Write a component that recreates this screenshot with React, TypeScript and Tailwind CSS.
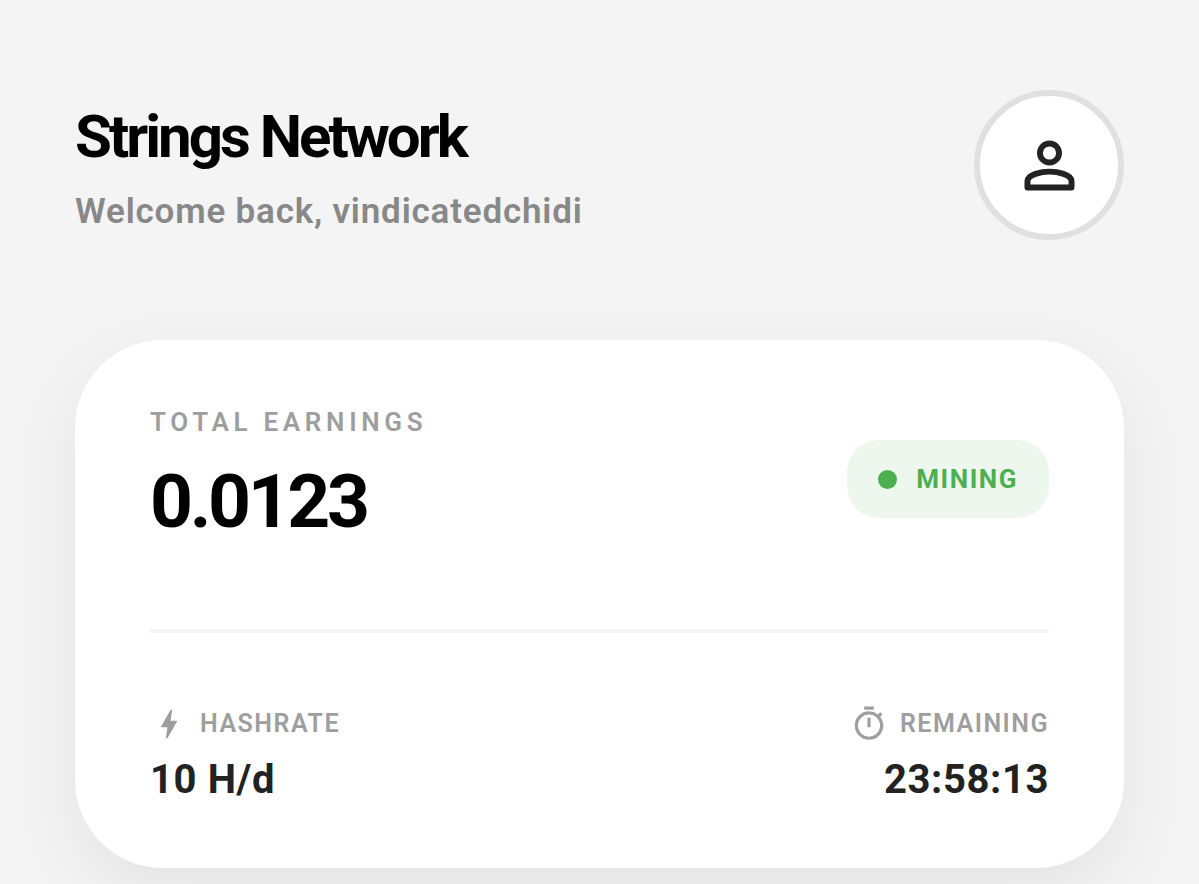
import type { ReactNode } from "react";
import { MdBolt, MdOutlineTimer } from "react-icons/md";

const App = () => {
  return (
    <main className="min-h-screen bg-[#f4f4f4] px-[75px] pt-[90px] pb-4 font-['Roboto',sans-serif]">
      <Header name="vindicatedchidi" />
      <EarningsCard
        total="0.0123"
        status="Mining"
        hashrate="10 H/d"
        remaining="23:58:13"
      />
    </main>
  );
};

export default App;

function Header({ name }: { name: string }) {
  return (
    <header className="flex items-center justify-between">
      <div>
        <h1 className="text-[60px] leading-[78px] font-bold tracking-tighter text-black">
          Strings Network
        </h1>
        <p className="mt-4 text-[35px] leading-[40px] font-semibold tracking-[0.023em] text-[#888888]">
          Welcome back, {name}
        </p>
      </div>
      <button
        type="button"
        aria-label="Profile"
        className="flex size-[150px] shrink-0 items-center justify-center rounded-full border-6 border-[#e0e0e0] bg-white text-[#222222]"
      >
        <PersonIcon />
      </button>
    </header>
  );
}

interface EarningsCardProps {
  total: string;
  status: string;
  hashrate: string;
  remaining: string;
}
function EarningsCard({
  total,
  status,
  hashrate,
  remaining,
}: EarningsCardProps) {
  return (
    <section className="mt-[100px] rounded-[88px] bg-white px-[75px] py-[63px] shadow-[0_25px_75px_rgba(0,0,0,0.07)]">
      <div className="flex items-center justify-between">
        <div>
          <h2 className="text-[26px] leading-[38px] font-semibold tracking-[0.18em] text-[#9e9e9e] uppercase">
            Total Earnings
          </h2>
          <p className="mt-1.5 text-[75px] leading-[108px] font-bold tracking-[-0.045em] text-black">
            {total}
          </p>
        </div>
        <div className="flex h-[78px] items-center gap-[19px] rounded-[32px] bg-[#edf7ed] px-[31px]">
          <span className="size-[19px] rounded-full bg-[#4caf50]" />
          <span className="text-[26px] leading-[38px] font-bold tracking-[0.06em] text-[#4caf50] uppercase">
            {status}
          </span>
        </div>
      </div>
      <hr className="mt-[74px] border-t-4 border-[#f4f4f4]" />
      <dl className="mt-[72px] flex justify-between">
        <Stat
          icon={<MdBolt className="size-[38px]" />}
          label="Hashrate"
          value={hashrate}
        />
        <Stat
          icon={<MdOutlineTimer className="size-[38px]" />}
          label="Remaining"
          value={remaining}
          className="items-end"
        />
      </dl>
    </section>
  );
}

function Stat({
  icon,
  label,
  value,
  className = "",
}: {
  icon: ReactNode;
  label: string;
  value: string;
  className?: string;
}) {
  return (
    <div className={`flex flex-col ${className}`}>
      <dt className="flex items-center gap-3 text-[25px] leading-[38px] font-semibold tracking-[0.06em] text-[#9e9e9e] uppercase">
        {icon}
        {label}
      </dt>
      <dd className="mt-3 text-[40px] leading-[50px] font-bold tracking-[0.015em] text-[#222222]">
        {value}
      </dd>
    </div>
  );
}

function PersonIcon() {
  return (
    <svg viewBox="0 0 24 24" fill="none" className="size-[75px]">
      <circle cx="12" cy="8" r="3.05" stroke="currentColor" strokeWidth="1.9" />
      <path
        d="M4.95 19.05V17c0-2.15 4.55-3.05 7.05-3.05s7.05.9 7.05 3.05v2.05z"
        stroke="currentColor"
        strokeWidth="1.9"
        strokeLinejoin="round"
      />
    </svg>
  );
}
